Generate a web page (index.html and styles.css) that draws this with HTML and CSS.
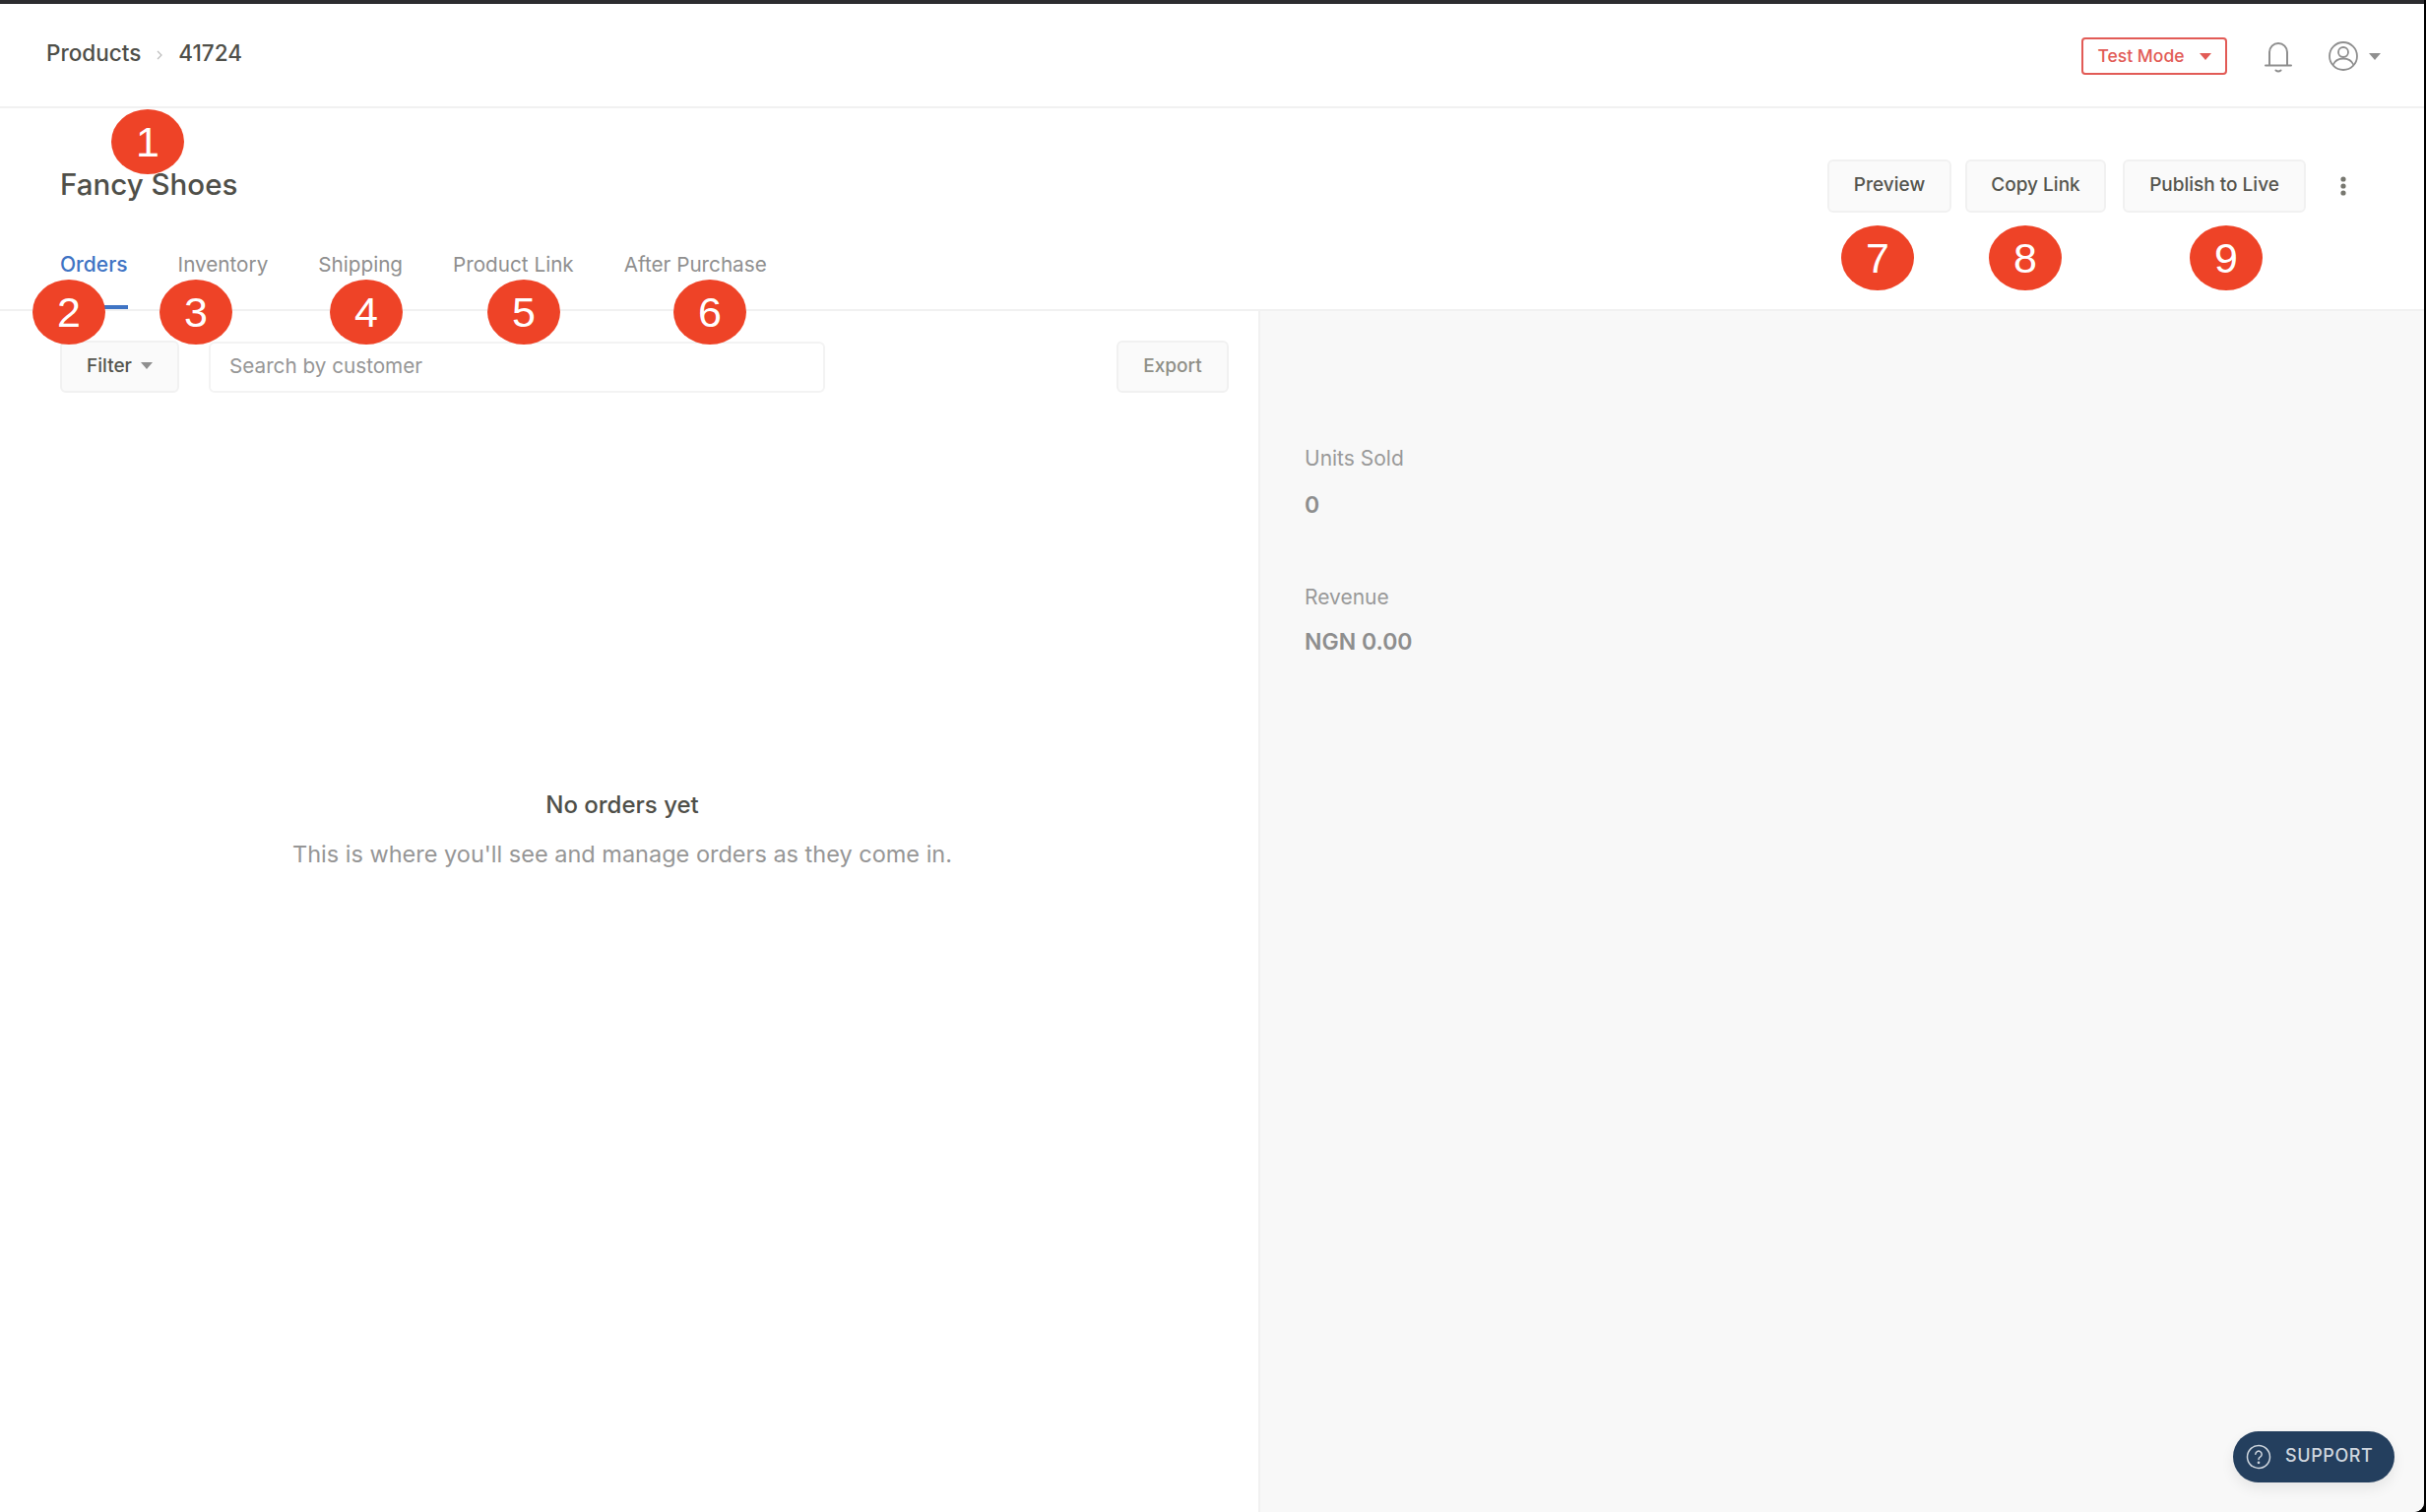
FILE: index.html
```html
<!DOCTYPE html>
<html lang="en">
<head>
  <meta charset="UTF-8">
  <title>Fancy Shoes - Products</title>
  <link rel="stylesheet" href="styles.css">
</head>
<body>
  <div class="window">
    <header class="topbar">
      <div class="crumbs">
        <span>Products</span>
        <svg class="crumb-sep" width="8" height="12" viewBox="0 0 8 12"><path d="M2 2l4 4-4 4" fill="none" stroke="#bdbdbd" stroke-width="1.2"/></svg>
        <span>41724</span>
      </div>
      <div class="topbar-right">
        <button class="test-mode">Test Mode <i class="caret caret-red"></i></button>
        <svg class="bell" width="30" height="34" viewBox="0 0 30 34" fill="none" stroke="#8f8f8f" stroke-width="2">
          <path d="M6 26V13a9 9 0 0 1 18 0v13"/>
          <path d="M2 26.500h26" stroke-linecap="round"/>
          <path d="M12.500 31.500c1.500 1.300 3.500 1.300 5 0" stroke-linecap="round"/>
        </svg>
        <div class="account">
          <svg width="30" height="30" viewBox="0 0 30 30" fill="none" stroke="#8f8f8f" stroke-width="1.800">
            <circle cx="15" cy="15" r="14"/>
            <circle cx="15" cy="11" r="5"/>
            <path d="M4.500 24c2-4.500 6-6.500 10.500-6.500S23.500 19.500 25.500 24"/>
          </svg>
          <i class="caret"></i>
        </div>
      </div>
    </header>

    <section class="product-head">
      <div class="title-row">
        <h1>Fancy Shoes</h1>
        <div class="actions">
          <button class="btn btn-preview">Preview</button>
          <button class="btn btn-copy">Copy Link</button>
          <button class="btn btn-publish">Publish to Live</button>
          <svg class="more" width="6" height="20" viewBox="0 0 6 20" fill="#77776f"><circle cx="3" cy="3" r="2.600"/><circle cx="3" cy="10" r="2.600"/><circle cx="3" cy="17" r="2.600"/></svg>
        </div>
      </div>
      <nav class="tabs">
        <a class="tab active">Orders</a>
        <a class="tab">Inventory</a>
        <a class="tab">Shipping</a>
        <a class="tab">Product Link</a>
        <a class="tab">After Purchase</a>
      </nav>
    </section>

    <main class="content">
      <section class="orders">
        <div class="toolbar">
          <button class="btn btn-filter">Filter <i class="caret"></i></button>
          <input class="search" type="text" placeholder="Search by customer">
          <button class="btn btn-export">Export</button>
        </div>
        <div class="empty">
          <h3>No orders yet</h3>
          <p>This is where you'll see and manage orders as they come in.</p>
        </div>
      </section>
      <aside class="side">
        <div class="stat stat-units">
          <div class="stat-label">Units Sold</div>
          <div class="stat-value">0</div>
        </div>
        <div class="stat stat-revenue">
          <div class="stat-label">Revenue</div>
          <div class="stat-value">NGN 0.00</div>
        </div>
      </aside>
    </main>

    <button class="support">
      <svg width="26" height="26" viewBox="0 0 26 26" fill="none" stroke="#cfd6de" stroke-width="1.500">
        <circle cx="13" cy="13" r="11.500"/>
        <path d="M9.800 10.300a3.200 3.200 0 1 1 4.800 2.800c-1 .6-1.600 1.200-1.600 2.400" stroke-linecap="round"/>
        <circle cx="13" cy="18.800" r=".6" fill="#cfd6de"/>
      </svg>
      <span>SUPPORT</span>
    </button>

    <span class="pin" style="left:113px;top:107px">1</span>
    <span class="pin" style="left:33px;top:280px">2</span>
    <span class="pin" style="left:162px;top:280px">3</span>
    <span class="pin" style="left:335px;top:280px">4</span>
    <span class="pin" style="left:495px;top:280px">5</span>
    <span class="pin" style="left:684px;top:280px">6</span>
    <span class="pin" style="left:1870px;top:225px">7</span>
    <span class="pin" style="left:2020px;top:225px">8</span>
    <span class="pin" style="left:2224px;top:225px">9</span>
  </div>
</body>
</html>
```

FILE: styles.css
```css
* {
  box-sizing: border-box;
}
html, body {
  margin: 0;
  height: 1536px;
  overflow: hidden;
  background-color: #000;
}
body {
  font-family: Inter, "Noto Sans", sans-serif;
  color: #4f4f49;
}
button, input {
  font-family: inherit;
}
.window {
  position: relative;
  width: 2462px;
  height: 1536px;
  background-color: white;
  border-top: 4px solid #2c2c2f;
  border-bottom-right-radius: 10px;
  display: flex;
  flex-direction: column;
  overflow: hidden;
}
.topbar {
  height: 106px;
  flex: none;
  border-bottom: 2px solid #f1f1f1;
  padding: 0 44px 0 47px;
  display: flex;
  justify-content: space-between;
  align-items: flex-start;
}
.crumbs {
  display: flex;
  align-items: center;
  gap: 15px;
  margin-top: 36px;
  font-size: 22.500px;
  font-weight: 500;
  line-height: 28px;
}
.crumb-sep {
  margin-top: 3px;
}
.topbar-right {
  display: flex;
  align-items: center;
  margin-top: 34px;
}
.test-mode {
  width: 148px;
  height: 38px;
  border: 2px solid #e25b56;
  border-radius: 4px;
  background: white;
  color: #e25b56;
  font-size: 17.500px;
  font-weight: 500;
  padding: 0 0 2px;
  display: flex;
  align-items: center;
  justify-content: center;
  gap: 15px;
}
.caret {
  display: inline-block;
  width: 0;
  height: 0;
  border-left: 6px solid transparent;
  border-right: 6px solid transparent;
  border-top: 7px solid #8f8f8f;
}
.caret-red {
  border-top-color: #e25b56;
  margin-top: 2px;
}
.bell {
  margin-left: 37px;
}
.account {
  display: flex;
  align-items: center;
  gap: 11px;
  margin-left: 36px;
}
.product-head {
  height: 206px;
  flex: none;
  border-bottom: 2px solid #f1f1f1;
  padding: 0 0 0 61px;
}
.title-row {
  height: 140px;
  display: flex;
  justify-content: space-between;
  align-items: flex-start;
}
h1 {
  margin: 56px 0 0;
  font-size: 29.500px;
  font-weight: 500;
  line-height: 42px;
}
.actions {
  display: flex;
  align-items: center;
  margin-top: 52px;
  padding-right: 79px;
}
.btn {
  height: 54px;
  background-color: #fafafa;
  border: 2px solid #f1f1f1;
  border-radius: 6px;
  color: #55554e;
  font-size: 19px;
  font-weight: 500;
  padding: 0 0 3px;
}
.btn-preview {
  width: 126px;
}
.btn-copy {
  width: 143px;
  margin-left: 14px;
}
.btn-publish {
  width: 186px;
  margin-left: 17px;
}
.more {
  margin-left: 35px;
}
.tabs {
  display: flex;
  gap: 51px;
  height: 64px;
}
.tab {
  font-size: 20.700px;
  line-height: 28px;
  padding-top: 5px;
  height: 64px;
  color: #8f8f8f;
}
.tab.active {
  font-size: 21px;
  color: #3f74c4;
  border-bottom: 4px solid #3f74c4;
  font-weight: 500;
}
.content {
  flex: 1;
  display: flex;
  min-height: 0;
}
.orders {
  width: 1278px;
  flex: none;
  padding-top: 30px;
}
.toolbar {
  display: flex;
  align-items: center;
  margin: 0 30px 0 61px;
}
.btn-filter {
  width: 121px;
  height: 53px;
  display: flex;
  align-items: center;
  justify-content: center;
  gap: 9px;
}
.search {
  width: 626px;
  height: 52px;
  margin-left: 30px;
  border: 2px solid #f3f3f3;
  border-radius: 6px;
  padding: 0 19px 2px;
  font-size: 20.700px;
  color: #55554e;
  outline: none;
}
.search::placeholder {
  color: #969696;
}
.btn-export {
  width: 114px;
  height: 53px;
  margin-left: auto;
  color: #8f8f87;
}
.empty {
  margin-top: 404px;
  padding-right: 14px;
  text-align: center;
}
.empty h3 {
  margin: 0;
  font-size: 24px;
  font-weight: 500;
  line-height: 30px;
}
.empty p {
  margin: 20px 0 0;
  font-size: 23.500px;
  line-height: 30px;
  color: #969696;
}
.side {
  flex: 1;
  background-color: #f8f8f8;
  border-left: 2px solid #f1f1f1;
  padding: 136px 0 0 45px;
}
.stat-units {
  margin-bottom: 66px;
}
.stat-label {
  font-size: 21px;
  line-height: 28px;
  color: #999;
}
.stat-value {
  margin-top: 19px;
  font-size: 23px;
  font-weight: 600;
  line-height: 28px;
  color: #8e8e8e;
}
.stat-revenue .stat-value {
  margin-top: 17px;
}
.support {
  position: absolute;
  left: 2268px;
  top: 1450px;
  width: 164px;
  height: 52px;
  border: none;
  border-radius: 26px;
  background-color: #243f5e;
  box-shadow: 0 6px 14px rgba(0,0,0,0.08);
  color: #cfd6de;
  font-size: 18px;
  font-weight: 500;
  letter-spacing: .6px;
  padding: 0 0 0 13px;
  display: flex;
  align-items: center;
  gap: 14px;
}
.support span {
  margin-top: -3px;
}
.pin {
  position: absolute;
  width: 74px;
  height: 66px;
  border-radius: 50%;
  background-color: #ee4327;
  color: white;
  font-family: "Liberation Sans", Arial, sans-serif;
  font-size: 43px;
  line-height: 66px;
  text-align: center;
}
```
